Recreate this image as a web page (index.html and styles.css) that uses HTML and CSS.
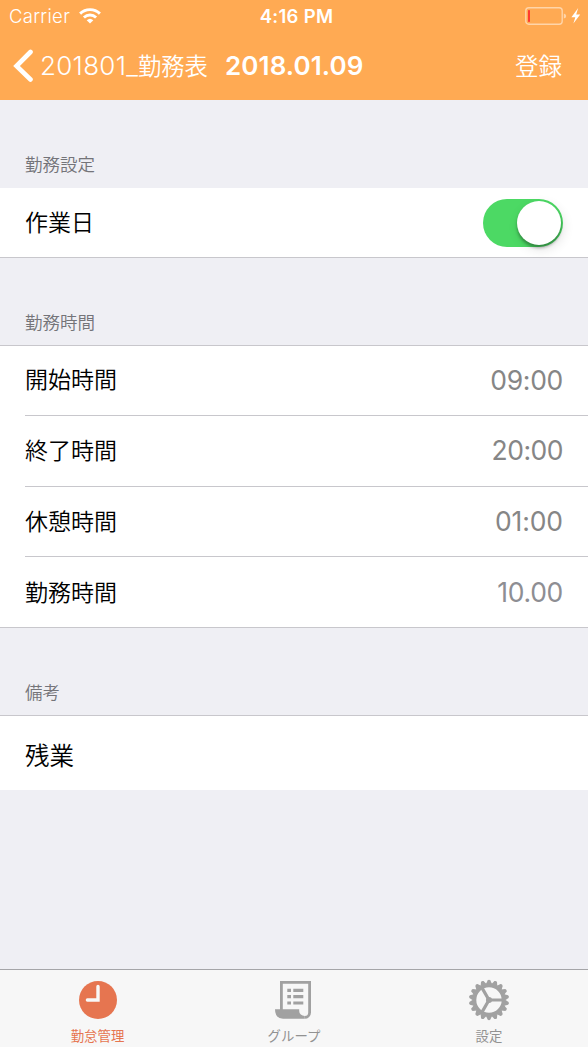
FILE: index.html
```html
<!DOCTYPE html>
<html lang="ja">
<head>
<meta charset="utf-8">
<title>勤怠管理</title>
<link rel="stylesheet" href="styles.css">
</head>
<body>
<div class="screen">
  <header class="top">
    <div class="status">
      <div class="status-left"><span class="carrier">Carrier</span>
        <svg class="wifi" width="22" height="16" viewBox="0 0 22 16" fill="none" stroke="#fff" stroke-width="2.9"><path d="M1.1 5.6a14.2 14.2 0 0 1 19.8 0M4.9 9.5a8.8 8.8 0 0 1 12.2 0"/><path d="M11 15.6 7.7 12.3a4.8 4.8 0 0 1 6.6 0z" fill="#fff" stroke="none"/></svg>
      </div>
      <div class="clock">4:16 PM</div>
      <div class="status-right">
        <svg width="56" height="20" viewBox="0 0 56 20"><rect x=".8" y="1.8" width="36.4" height="16.4" rx="3" fill="none" stroke="#fff" stroke-opacity=".5" stroke-width="1.4"/><rect x="3" y="4" width="2" height="12" rx=".7" fill="#ff3b30"/><path d="M38.8 7.4q2.4.6 2.4 2.6t-2.4 2.6z" fill="#fff" fill-opacity=".5"/><path d="M53.200 2 46.400 11.200h3.900l-1.900 6.300 6.800-9h-4z" fill="#fff"/></svg>
      </div>
    </div>
    <nav class="nav">
      <div class="back">
        <svg width="21" height="34" viewBox="0 0 21 34" fill="none" stroke="#fff" stroke-width="4.6" stroke-linecap="round" stroke-linejoin="miter"><path d="M18.500 3 4.500 17l14 13.500"/></svg>
        <span class="back-num">201801_</span><span class="back-cjk">勤務表</span>
      </div>
      <h1 class="title">2018.01.09</h1>
      <span class="save">登録</span>
    </nav>
  </header>
  <main class="content">
    <h2 class="section first">勤務設定</h2>
    <div class="row switch-row"><span class="label">作業日</span><span class="switch"><span class="knob"></span></span></div>
    <h2 class="section">勤務時間</h2>
    <div class="group">
      <div class="row lined"><span class="label start">開始時間</span><span class="value v1">09:00</span></div>
      <div class="row lined tall"><span class="label">終了時間</span><span class="value v2">20:00</span></div>
      <div class="row lined"><span class="label">休憩時間</span><span class="value v3">01:00</span></div>
      <div class="row tall"><span class="label">勤務時間</span><span class="value v4">10.00</span></div>
    </div>
    <h2 class="section">備考</h2>
    <div class="note"><span>残業</span></div>
  </main>
  <footer class="tabs">
    <div class="tab active">
      <svg width="42" height="42" viewBox="0 0 42 42"><circle cx="21" cy="21" r="19" fill="#e67550"/><path d="M21 7.4V21H10.4" fill="none" stroke="#f8f8f8" stroke-width="3.4" stroke-linecap="round"/></svg>
      <span class="t1">勤怠管理</span>
    </div>
    <div class="tab">
      <svg width="42" height="42" viewBox="0 0 42 42"><path d="M8.400 31V3.400h28.200V33.500a4.900 4.900 0 0 1-4.900 4.900" fill="none" stroke="#a1a1a1" stroke-width="2.800"/><path d="M2 30.300h24.200v1.700a5.500 5 0 0 0 5.500 5v2.800H10q-8-.5-8-9.500z" fill="#a1a1a1"/><path d="M14.300 9.800H18V13h-3.700zM20.300 9.800h10V13h-10zM14.300 16H18v3.200h-3.700zM20.300 16h10v3.200h-10zM14.300 22.400H18v3.200h-3.700zM20.300 22.400h10v3.200h-10z" fill="#a1a1a1"/></svg>
      <span class="t2">グループ</span>
    </div>
    <div class="tab">
      <svg width="42" height="42" viewBox="0 0 42 42">
        <defs><path id="tooth" d="M18 5 19.600 1.400Q21 .1 22.400 1.400L24 5z"/><g id="teeth3"><use href="#tooth"/><use href="#tooth" transform="rotate(20 21 21)"/><use href="#tooth" transform="rotate(40 21 21)"/></g></defs>
        <g fill="#a1a1a1"><use href="#teeth3"/><use href="#teeth3" transform="rotate(60 21 21)"/><use href="#teeth3" transform="rotate(120 21 21)"/><use href="#teeth3" transform="rotate(180 21 21)"/><use href="#teeth3" transform="rotate(240 21 21)"/><use href="#teeth3" transform="rotate(300 21 21)"/></g>
        <circle cx="21" cy="21" r="14.700" fill="none" stroke="#a1a1a1" stroke-width="4"/><path d="M35 21H21L14 8.900M21 21l-7 12.100" fill="none" stroke="#a1a1a1" stroke-width="3.200"/><circle cx="21" cy="21" r="3" fill="#a1a1a1"/>
      </svg>
      <span class="t3">設定</span>
    </div>
  </footer>
</div>
</body>
</html>
```
FILE: styles.css
```css
* { box-sizing: border-box; }
body { margin: 0; font-family: Inter, "Noto Sans CJK JP", sans-serif; }
svg { display: block; flex: none; }
.screen { width: 588px; height: 1047px; display: flex; flex-direction: column; background: #efeff4; overflow: hidden; }
.top { height: 100px; flex: none; background: #ffaa53; color: #fff; }
.status { height: 33px; display: grid; grid-template-columns: 1fr auto 1fr; align-items: center; }
.status-left { display: flex; align-items: center; padding-left: 9px; gap: 9px; }
.carrier { font-size: 18.500px; line-height: 33px; letter-spacing: .3px; width: 61px; font-weight: 350; }
.wifi { margin-top: -2px; }
.clock { font-size: 18.500px; font-weight: 600; letter-spacing: .3px; line-height: 33px; padding-left: 5px; }
.status-right { display: flex; justify-content: flex-end; padding-right: 7px; margin-top: -1px; }
.nav { height: 67px; display: flex; align-items: center; padding: 0 26px 2px 12px; line-height: 36px; }
.back { display: flex; align-items: center; width: 213px; font-weight: 300; white-space: nowrap; }
.back-num { width: 98px; margin-left: 7px; font-size: 26px; letter-spacing: .3px; }
.back-cjk { font-family: "Noto Sans CJK JP", sans-serif; font-size: 23.300px; font-weight: 350; padding-bottom: 1px; }
.title { margin: 0; font-size: 26px; font-weight: 600; letter-spacing: .1px; flex: 1; }
.save { font-family: "Noto Sans CJK JP", sans-serif; font-size: 23.500px; font-weight: 350; padding-bottom: 1px; }
.content { flex: 1; }
.section { margin: 0; height: 87px; padding: 51px 0 0 25px; font-family: "Noto Sans CJK JP", sans-serif; font-size: 17.500px; line-height: 26px; font-weight: 350; color: #747479; }
.section.first { height: 88px; padding-top: 51px; }
.row { height: 70px; display: flex; align-items: center; justify-content: space-between; padding-right: 25px; }
.label { font-family: "Noto Sans CJK JP", sans-serif; font-size: 23px; font-weight: 350; color: #000; line-height: 36px; padding-bottom: 4px; }
.start { padding-bottom: 5px; }
.switch-row { background: #fff; padding-left: 25px; border-bottom: 1px solid #c8c7cc; }
.switch { width: 80px; height: 48px; border-radius: 24px; background: #4cd964; display: flex; justify-content: flex-end; padding: 2px; margin-top: 1px; }
.knob { width: 44px; height: 44px; border-radius: 50%; background: #fff; box-shadow: 0 3px 3px rgba(0,0,0,.3), 2px 4px 12px rgba(0,0,0,.12); }
.group { background: #fff; padding-left: 25px; height: 283px; border-top: 1px solid #c8c7cc; border-bottom: 1px solid #c8c7cc; }
.lined { border-bottom: 1px solid #c8c7cc; }
.tall { height: 71px; }
.value { font-size: 26.500px; letter-spacing: -.3px; color: #868686; line-height: 36px; padding-bottom: 2px; }
.v2 { letter-spacing: -.5px; }
.v3 { letter-spacing: -.1px; }
.v4 { color: #8e8e93; }
.note { height: 75px; background: #fff; border-top: 1px solid #c8c7cc; padding: 20px 0 0 25px; font-family: "Noto Sans CJK JP", sans-serif; font-size: 24.500px; font-weight: 350; line-height: 38px; color: #000; }
.tabs { height: 78px; flex: none; border-top: 1px solid #a5a5a8; background: #f7f7f7; display: grid; grid-template-columns: repeat(3, 1fr); color: #929292; font-family: "Noto Sans CJK JP", sans-serif; }
.tab { display: flex; flex-direction: column; align-items: center; padding-top: 9px; font-size: 13.400px; line-height: 20px; }
.tab span { margin-top: 4px; }
.tab:last-child { padding-right: 2px; }
.active { color: #e67550; }
.t1 { padding-right: 1px; }
```
